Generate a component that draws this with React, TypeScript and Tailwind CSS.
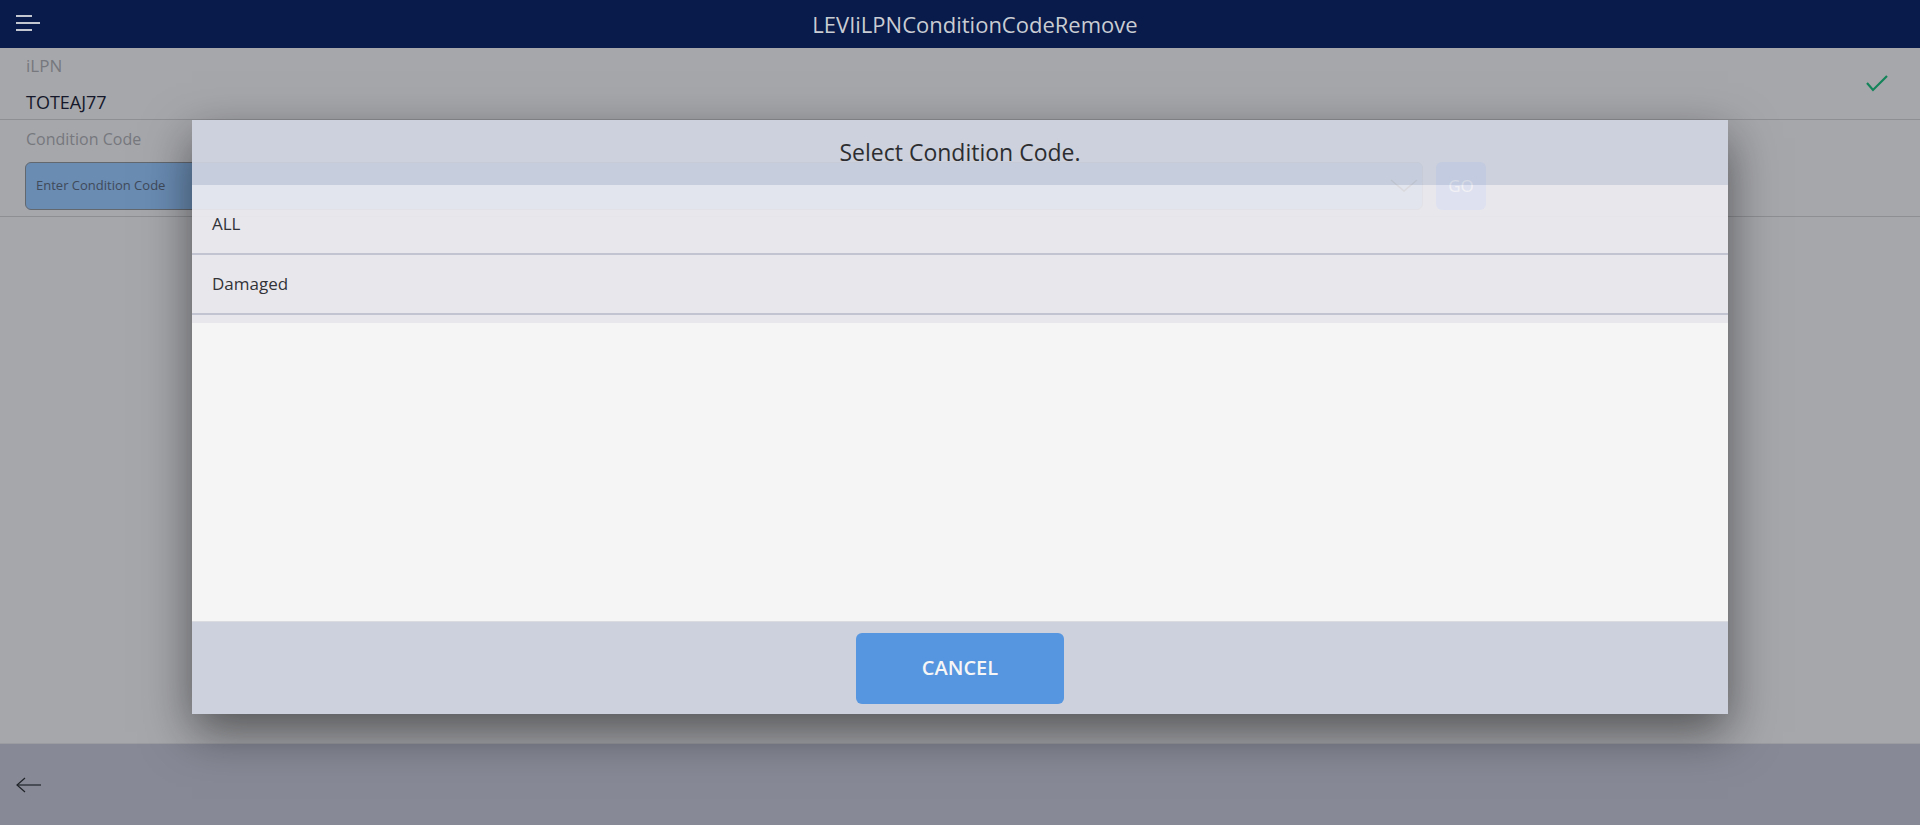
const font = { fontFamily: '"Open Sans", "Noto Sans", sans-serif' };

const codes = ["ALL", "Damaged"];

function Menu() {
  return (
    <svg width="48" height="48" viewBox="0 0 48 48" className="shrink-0">
      <g stroke="#c3c7cf" strokeWidth="2">
        <line x1="16" y1="16" x2="32" y2="16" />
        <line x1="16" y1="23" x2="40" y2="23" />
        <line x1="16" y1="30" x2="32" y2="30" />
      </g>
    </svg>
  );
}

export default function App() {
  return (
    <div
      style={font}
      className="relative flex h-[825px] w-[1920px] flex-col overflow-hidden bg-[#a6a7ab]"
    >
      {/* top bar */}
      <header className="flex h-12 shrink-0 items-center bg-[#081b4a]">
        <Menu />
        <h1 className="flex-1 pr-[18px] text-center text-[22px] font-medium text-[#c9ccd3]">
          LEVIiLPNConditionCodeRemove
        </h1>
      </header>

      {/* dimmed form behind the dialog */}
      <main className="flex-1">
        <div className="flex items-center justify-between border-b border-[#8e8f93] pr-[31px]">
          <div className="flex flex-col pt-[6px] pb-[5px] pl-[26px]">
            <span className="text-[17px] leading-6 text-[#76787e]">iLPN</span>
            <span className="mt-3 text-[18px] leading-6 text-[#15182a]">TOTEAJ77</span>
          </div>
          <svg width="24" height="24" viewBox="0 0 24 24">
            <polyline points="2,11 8,18 22,4" fill="none" stroke="#13845a" strokeWidth="2.2" />
          </svg>
        </div>
        <div className="flex flex-col border-b border-[#8e8f93] pt-[7px] pb-[6px] pl-[25px]">
          <span className="pl-px text-[16px] leading-6 text-[#76787e]">Condition Code</span>
          <div className="mt-[11px] flex items-center gap-[13px]">
            <div className="flex h-12 w-[1398px] items-center justify-between rounded-md border border-[#63686f] bg-[#6a8cb3] pr-[4px] pl-[10px]">
              <span className="text-[13px] text-[#3f4a5a]">Enter Condition Code</span>
              <svg width="28" height="14" viewBox="0 0 28 14" className="shrink-0">
                <polyline points="1,1 14,12 27,1" fill="none" stroke="#10141c" strokeWidth="1.6" />
              </svg>
            </div>
            <div className="flex h-12 w-[50px] items-center justify-center rounded-md bg-[#3d68c4] text-[17px] text-white">
              GO
            </div>
          </div>
        </div>
      </main>

      {/* bottom bar */}
      <footer className="flex h-[82px] shrink-0 items-center border-t border-[#9a9ca2] bg-[#878a96] pl-4">
        <svg width="26" height="16" viewBox="0 0 26 16">
          <g fill="none" stroke="#1f2328" strokeWidth="1.2">
            <line x1="1" y1="8" x2="25" y2="8" />
            <polyline points="9,1 1,8 9,15" />
          </g>
        </svg>
      </footer>

      {/* condition code dialog */}
      <div className="absolute top-[120px] left-[192px] flex h-[594px] w-[1536px] flex-col opacity-90 shadow-[0_18px_45px_rgba(0,0,0,0.55)]">
        <div className="flex h-[65px] shrink-0 items-center justify-center bg-[#d1d6e3] text-[23px] text-[#1e1f24]">
          Select Condition Code.
        </div>
        <ul className="shrink-0 bg-[#f0eff4] pt-[10px] pb-2">
          {codes.map((c) => (
            <li
              key={c}
              className="flex h-[60px] items-center border-b-2 border-[#c6c9d6] pl-5 text-[17px] text-[#26272c]"
            >
              {c}
            </li>
          ))}
        </ul>
        <div className="flex-1 bg-[#fefefe]" />
        <div className="flex h-[93px] shrink-0 items-center justify-center border-t border-[#dfe1e6] bg-[#d1d6e3]">
          <button className="h-[71px] w-[208px] rounded-md bg-[#4e94e5] text-[20px] font-semibold text-white">
            CANCEL
          </button>
        </div>
      </div>
    </div>
  );
}
